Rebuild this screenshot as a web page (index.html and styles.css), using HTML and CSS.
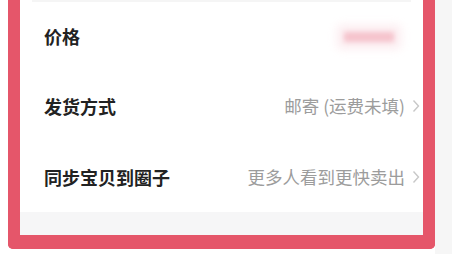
FILE: index.html
```html
<!DOCTYPE html>
<html>
<head>
  <title>发布宝贝</title>
  <link rel="stylesheet" href="styles.css">
</head>
<body>
  <div class="frame">
    <div class="card">
      <div class="row first">
        <span class="label">价格</span>
        <span class="price"></span>
      </div>
      <div class="row">
        <span class="label">发货方式</span>
        <span class="value">邮寄 (运费未填)</span>
        <svg class="arrow" width="8" height="14" viewBox="0 0 8 14"><polyline points="1.5,1.5 6.5,7 1.5,12.5" /></svg>
      </div>
      <div class="row">
        <span class="label">同步宝贝到圈子</span>
        <span class="value">更多人看到更快卖出</span>
        <svg class="arrow" width="8" height="14" viewBox="0 0 8 14"><polyline points="1.5,1.5 6.5,7 1.5,12.5" /></svg>
      </div>
    </div>
    <div class="footer"></div>
  </div>
</body>
</html>
```
FILE: styles.css
```css
body {
  margin: 0;
  height: 254px;
  overflow: hidden;
  font-family: "Noto Sans CJK SC", "Noto Sans", sans-serif;
  background: linear-gradient(to right, #fff 0, #fff 435px, #f6f6f6 435px);
}

.frame {
  width: 403px;
  margin-left: 8px;
  border: 12px solid #e5566a;
  border-top: none;
  border-bottom-width: 14px;
  border-radius: 0 0 5px 5px;
  background-color: #fff;
}

.card {
  background-color: #fff;
}

.row {
  display: flex;
  align-items: center;
  height: 71px;
  padding: 0 3px 0 24px;
}

.row.first {
  height: 68px;
  border-top: 2px solid #f5f5f5;
  margin: 0 12px;
  padding: 0 15px 0 12px;
}

.label {
  flex: 1;
  font-size: 18px;
  font-weight: bold;
  color: #222;
}

.value {
  font-size: 17.5px;
  color: #9c9c9c;
}

.arrow {
  margin-left: 7px;
  fill: none;
  stroke: #c8c8c8;
  stroke-width: 1.4;
}

.price {
  width: 50px;
  height: 10px;
  margin-top: 2px;
  margin-right: 2px;
  background-color: #f5c3cc;
  filter: blur(2.5px);
  box-shadow: 0 0 8px 7px #fcedf0;
}

.footer {
  height: 23px;
  background-color: #f6f6f7;
}
```
